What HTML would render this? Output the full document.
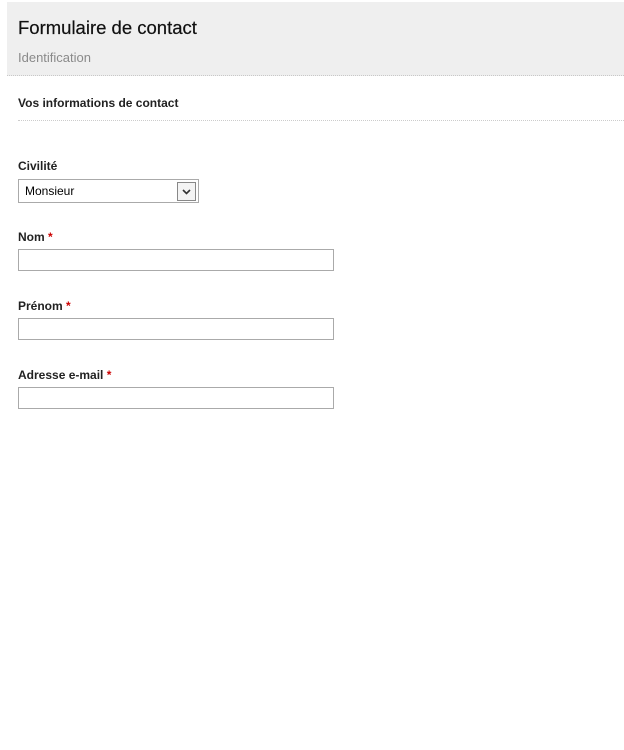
<!DOCTYPE html>
<html><head><meta charset="utf-8"><style>
body{margin:0;background:#fff;width:624px;height:750px;font-family:"Liberation Sans",Arial,sans-serif;position:relative;overflow:hidden}
.hd{position:absolute;left:7px;top:2px;width:617px;height:73px;background:#efefef;border-bottom:1px dotted #c8c8c8}
.t{position:absolute;left:18px;top:17px;font-size:18.5px;color:#111;-webkit-text-stroke:0.2px #111}
.s{position:absolute;left:18px;top:50px;font-size:13px;color:#8a8a8a}
.st{position:absolute;left:18px;top:96px;font-size:12px;font-weight:bold;color:#222}
.ln{position:absolute;left:18px;top:120px;width:606px;border-top:1px dotted #ccc}
.l{position:absolute;left:18px;font-size:12px;font-weight:bold;color:#222}
.l b{color:#c00}
.in{position:absolute;left:18px;width:314px;height:20px;border:1px solid #aaa;background:#fff}
.sel{position:absolute;left:18px;top:179px;width:179px;height:22px;border:1px solid #aaa;font-size:12px}
.sel span{position:absolute;left:6px;top:4px}
.ar{position:absolute;right:2px;top:2px;width:17px;height:17px;border:1px solid #888;background:#f4f4f4}
</style></head><body>
<div class="hd"></div>
<div class="t">Formulaire de contact</div>
<div class="s">Identification</div>
<div class="st">Vos informations de contact</div>
<div class="ln"></div>
<div class="l" style="top:159px">Civilité</div>
<div class="sel"><span>Monsieur</span><div class="ar"><svg width="17" height="17"><path d="M5 7 L8.5 10.5 L12 7" stroke="#333" stroke-width="1.6" fill="none"/></svg></div></div>
<div class="l" style="top:230px">Nom <b>*</b></div>
<div class="in" style="top:249px"></div>
<div class="l" style="top:299px">Prénom <b>*</b></div>
<div class="in" style="top:318px"></div>
<div class="l" style="top:368px">Adresse e-mail <b>*</b></div>
<div class="in" style="top:387px"></div>
</body></html>
